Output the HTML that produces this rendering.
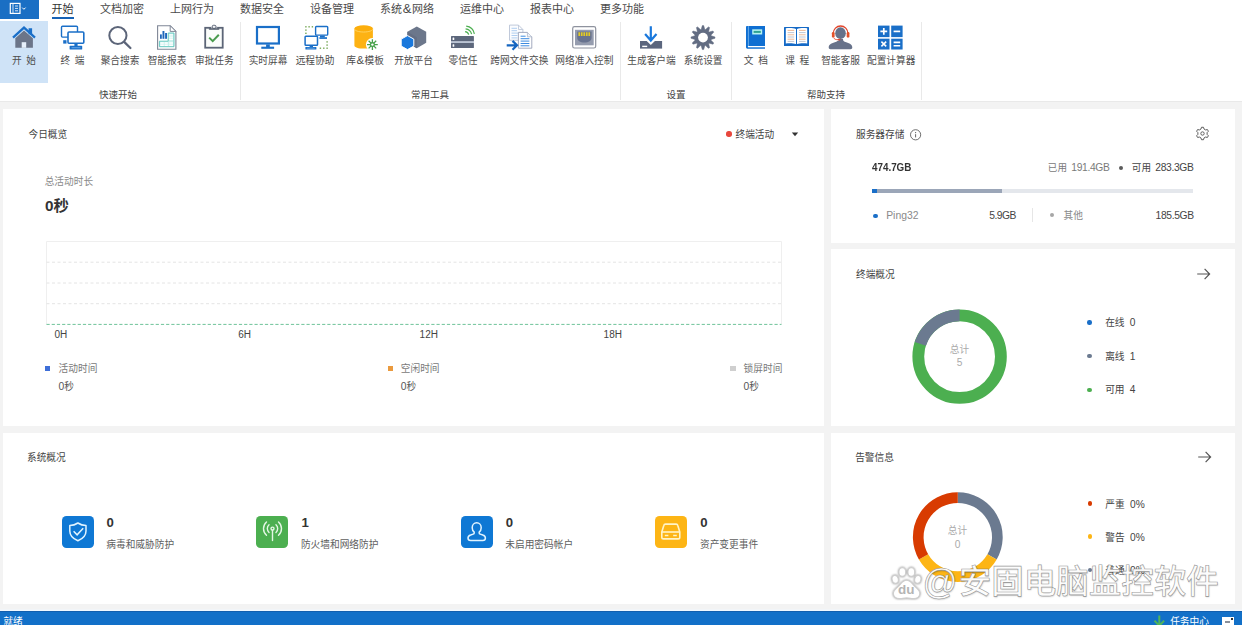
<!DOCTYPE html>
<html lang="zh-CN">
<head>
<meta charset="utf-8">
<title>Ping32</title>
<style>
*{box-sizing:border-box;margin:0;padding:0}
html,body{width:1242px;height:625px;overflow:hidden;background:#f3f3f3}
body{position:relative;font-family:"Liberation Sans","Noto Sans CJK SC",sans-serif;color:#444;font-size:10px}
.abs{position:absolute}
/* menu bar */
#menubar{position:absolute;left:0;top:0;width:1242px;height:19px;background:#fff}
#appbtn{position:absolute;left:0;top:0;width:38.7px;height:18.8px;background:#1a6fc4}
.tab{position:absolute;top:1.8px;height:15px;line-height:15px;font-size:11px;color:#4a4a4a;white-space:nowrap;transform:translateX(-50%)}
.tab.on{color:#333}
#tabline{position:absolute;left:52.2px;top:16.7px;width:21.6px;height:2.1px;background:#1762b5}
/* ribbon */
#ribbon{position:absolute;left:0;top:19px;width:1242px;height:83.4px;background:#fff;border-bottom:0.9px solid #e9e9e9}
#selbtn{position:absolute;left:0;top:20.8px;width:48.2px;height:62px;background:#cfe3f7}
.rb{position:absolute;top:54px;height:14px;line-height:14px;font-size:9.7px;color:#4d4d4d;white-space:nowrap;transform:translateX(-50%)}
.ic{position:absolute;top:25px;width:26px;height:26px;transform:translateX(-50%)}
.ic svg{display:block;width:26px;height:26px}
.grp{position:absolute;top:88px;height:13px;line-height:13px;font-size:9.5px;color:#444;white-space:nowrap;transform:translateX(-50%)}
.sep{position:absolute;top:22px;width:1px;height:78px;background:#e9e9e9}
/* cards */
.card{position:absolute;background:#fff}
.ct{position:absolute;font-size:9.7px;color:#444;white-space:nowrap;line-height:14px;margin-top:0.5px}
.xl{transform:translateX(-50%);font-size:10px;color:#444}
.n{font-size:10.3px}
.lt{font-size:10.3px}
.sq{top:515.5px;width:32.3px;height:32.3px;border-radius:4.5px}
.num{top:513px;font-size:13.2px;line-height:20px;font-weight:bold;color:#333}
#wmt{left:958.7px;top:560.2px;font-size:32.5px}
.wmc{line-height:44px;white-space:nowrap;color:rgba(255,255,255,0.95);-webkit-text-stroke:0.6px rgba(105,105,105,0.7);text-shadow:0.6px 0.6px 1.5px rgba(0,0,0,0.2);font-family:"Liberation Sans","Noto Sans CJK SC",sans-serif;font-weight:500}
/* status bar */
#status{position:absolute;left:0;top:610.7px;width:1242px;height:15px;background:#1270c8;border-top:0.9px solid #125fae;box-shadow:0 -1.4px 0 #f1f8ff}
</style>
</head>
<body>
<div id="menubar">
  <div id="appbtn">
    <svg class="abs" style="left:8px;top:2px" width="22" height="13" viewBox="0 0 22 13"><rect x="2.3" y="1.4" width="9.7" height="10" fill="none" stroke="#fff" stroke-width="1.2"/><path d="M5 1.400v10M7 4h3M7 6.400h3M7 8.800h3" stroke="#e8f1fb" stroke-width="0.900" fill="none"/><path d="M14.200 5.600l1.700 1.700 1.700-1.700" stroke="#fff" stroke-width="1" fill="none"/></svg>
  </div>
  <div class="tab on" style="left:62.5px">开始</div>
  <div class="tab" style="left:122px">文档加密</div>
  <div class="tab" style="left:192px">上网行为</div>
  <div class="tab" style="left:262px">数据安全</div>
  <div class="tab" style="left:332px">设备管理</div>
  <div class="tab" style="left:407px">系统<span style="font-size:13px;line-height:10px;padding:0 0.7px">&amp;</span>网络</div>
  <div class="tab" style="left:482px">运维中心</div>
  <div class="tab" style="left:552px">报表中心</div>
  <div class="tab" style="left:622px">更多功能</div>
  <div id="tabline"></div>
</div>
<div id="ribbon"></div>
<div id="selbtn"></div>

<!-- ribbon labels -->
<div class="rb" style="left:24px;word-spacing:2px">开 始</div>
<div class="rb" style="left:72.5px;word-spacing:2px">终 端</div>
<div class="rb" style="left:120px">聚合搜索</div>
<div class="rb" style="left:167px">智能报表</div>
<div class="rb" style="left:214.3px">审批任务</div>
<div class="rb" style="left:268px">实时屏幕</div>
<div class="rb" style="left:315px">远程协助</div>
<div class="rb" style="left:365.1px">库<span style="font-size:11.4px;line-height:10px;padding:0 0.4px">&amp;</span>模板</div>
<div class="rb" style="left:413.5px">开放平台</div>
<div class="rb" style="left:463px">零信任</div>
<div class="rb" style="left:519.3px">跨网文件交换</div>
<div class="rb" style="left:584.4px">网络准入控制</div>
<div class="rb" style="left:651.5px">生成客户端</div>
<div class="rb" style="left:703.2px">系统设置</div>
<div class="rb" style="left:755.8px;word-spacing:2px">文 档</div>
<div class="rb" style="left:797.2px;word-spacing:2px">课 程</div>
<div class="rb" style="left:840.5px">智能客服</div>
<div class="rb" style="left:891.2px">配置计算器</div>
<div class="grp" style="left:118px">快速开始</div>
<div class="grp" style="left:430px">常用工具</div>
<div class="grp" style="left:676px">设置</div>
<div class="grp" style="left:826px">帮助支持</div>
<div class="sep" style="left:240px"></div>
<div class="sep" style="left:620px"></div>
<div class="sep" style="left:731px"></div>
<div class="sep" style="left:921px"></div>

<!-- ICONS -->
<!--ICONS-START-->
<svg class="abs" style="left:0;top:0" width="1242" height="101" viewBox="0 0 1242 101">
<!-- home -->
<g>
<path d="M15.3 38.2 L24 30.6 L32.9 38.2 V47.8 H15.3Z" fill="#6b7589"/>
<rect x="21.7" y="42.2" width="4.5" height="5.6" fill="#e6f0fb"/>
<path d="M28.6 28.2h3.5v6h-3.5z" fill="#1a6fc8"/>
<path d="M13 37.6 L24 27.6 L35 37.6" fill="none" stroke="#1a6fc8" stroke-width="2.3" stroke-linejoin="miter"/>
</g>
<!-- terminal -->
<g fill="none" stroke="#1a6fc8">
<rect x="61.5" y="26.3" width="16" height="10.8" rx="1" stroke-width="1.4" fill="#fff"/>
<rect x="63.2" y="40.2" width="3.3" height="3.4" fill="#1a6fc8" stroke="none"/>
<rect x="68" y="32" width="15.8" height="11.2" rx="1" stroke-width="1.6" fill="#fff"/>
<rect x="74.4" y="43.6" width="3.2" height="2.6" fill="#1a6fc8" stroke="none"/>
<rect x="69.6" y="45.8" width="12.6" height="3.8" rx="0.6" fill="#1a6fc8" stroke="none"/>
<path d="M71.5 47.7h9" stroke="#6aa9ea" stroke-width="0.9"/>
</g>
<!-- search -->
<g fill="none" stroke="#5c6579" stroke-linecap="round">
<circle cx="117.9" cy="35.5" r="8.6" stroke-width="2"/>
<path d="M124.4 42.2L130.4 48" stroke-width="2.3"/>
</g>
<!-- report -->
<g>
<path d="M157.600 25.700h12.600l5.700 5.700v17.800h-18.300z" fill="#fff" stroke="#7f8696" stroke-width="1.100"/>
<path d="M170.200 25.700v5.700h5.700z" fill="#fff" stroke="#7f8696" stroke-width="1" stroke-linejoin="round"/>
<rect x="160" y="34.400" width="1.800" height="4.400" fill="#1e66bb"/>
<rect x="162.500" y="31" width="1.900" height="7.800" fill="#1e66bb"/>
<rect x="165.100" y="33" width="1.900" height="5.800" fill="#1e66bb"/>
<path d="M159.400 41.200h8.800v-8.200h5.800v13.700h-14.600z" fill="#c9efec" stroke="#5cc4bc" stroke-width="0.900"/>
<path d="M160.400 42.300h3.400v1.500h-3.400zM164.600 42.300h3.200v1.500h-3.200zM160.400 44.500h3.400v1.400h-3.400zM164.600 44.500h3.200v1.400h-3.200zM169.200 34.200h3.800v1.400h-3.800zM169.200 36.400h3.800v1.400h-3.800zM169.200 38.600h3.800v1.400h-3.800zM169.200 42.300h3.800v1.500h-3.800zM169.200 44.500h3.800v1.400h-3.800z" fill="#fff"/>
</g>
<!-- approve -->
<g>
<rect x="205.200" y="27.800" width="17.500" height="19.900" fill="#fbfdfb" stroke="#5c6577" stroke-width="1.800"/>
<path d="M211 28.600h6.200" stroke="#fbfdfb" stroke-width="2.400"/>
<rect x="212.300" y="25.300" width="3.600" height="3" rx="1" fill="#f4f5f8" stroke="#5c6577" stroke-width="1"/>
<path d="M209.500 28.900h9.200" stroke="#4f5869" stroke-width="1.500" stroke-linecap="round"/>
<path d="M209.200 37.600l3.500 3.500 6.100-6.400" fill="none" stroke="#4a9c4e" stroke-width="2"/>
</g>
<!-- monitor -->
<g>
<rect x="257" y="27" width="21.9" height="16.5" fill="#fff" stroke="#1a6fc8" stroke-width="2.2"/>
<rect x="266.1" y="44.4" width="3.7" height="2.8" fill="#1a6fc8"/>
<rect x="261.3" y="46.7" width="12.8" height="2.1" fill="#1a6fc8"/>
</g>
<!-- remote -->
<g>
<rect x="305.2" y="26.1" width="1.4" height="1.4" fill="#74a653"/><rect x="308.4" y="26.1" width="1.4" height="1.4" fill="#74a653"/><rect x="311.7" y="26.1" width="1.4" height="1.4" fill="#74a653"/><rect x="305.2" y="29.4" width="1.4" height="1.4" fill="#74a653"/><rect x="305.2" y="32.6" width="1.4" height="1.4" fill="#74a653"/><rect x="326.4" y="41.2" width="1.4" height="1.4" fill="#74a653"/><rect x="326.4" y="44.4" width="1.4" height="1.4" fill="#74a653"/><rect x="326.4" y="47.5" width="1.4" height="1.4" fill="#74a653"/><rect x="323.1" y="47.5" width="1.4" height="1.4" fill="#74a653"/><rect x="319.7" y="47.5" width="1.4" height="1.4" fill="#74a653"/>
<rect x="315.6" y="26.5" width="12.1" height="8.6" rx="0.8" fill="#fff" stroke="#1a6fc8" stroke-width="1.4"/>
<rect x="320" y="35.6" width="4.8" height="1.7" fill="#1a6fc8"/>
<rect x="319.4" y="37.2" width="7.6" height="1.7" fill="#1a6fc8"/>
<rect x="305.1" y="36.2" width="12.4" height="9" rx="0.8" fill="#fff" stroke="#1a6fc8" stroke-width="1.5"/>
<rect x="309.6" y="45.6" width="3.4" height="1.8" fill="#1a6fc8"/>
<rect x="305.4" y="47" width="11" height="2.4" rx="0.5" fill="#1a6fc8"/>
<path d="M306.8 48.2h8" stroke="#7cb6ee" stroke-width="0.7"/>
</g>
<!-- db -->
<g>
<path d="M354.400 28.600v16.800c0 1.800 4.100 3.200 9.250 3.200s9.250-1.400 9.250-3.200v-16.800z" fill="#fdb213"/>
<ellipse cx="363.650" cy="28.600" rx="9.250" ry="3.300" fill="#fcae0c"/>
<path d="M354.400 28.800c0 1.800 4.100 3.200 9.250 3.200s9.250-1.400 9.250-3.200" fill="none" stroke="#ffd567" stroke-width="0.900"/>
<circle cx="372.400" cy="44.600" r="6.500" fill="#fff"/>
<g stroke="#48a24c" stroke-width="1.300" fill="none">
<path d="M372.400 39.200v10.800M367 44.600h10.800M368.600 40.800l7.600 7.600M376.200 40.800l-7.600 7.600"/>
</g>
<circle cx="372.400" cy="44.600" r="2.500" fill="#48a24c"/>
<circle cx="372.400" cy="44.600" r="1.200" fill="#fff"/>
</g>
<!-- platform -->
<g>
<path d="M416.8 26.4l9.4 5.4v10.9l-9.4 5.5-9.4-5.5v-10.9z" fill="#6c778b"/>
<path d="M416.8 37.3v10.9l-9.4-5.5v-10.9z" fill="#646e83"/>
<path d="M407.5 35.6l6.3 3.5v7l-6.3 3.5-6.3-3.5v-7z" fill="#1a78dc" stroke="#fff" stroke-width="1"/>
</g>
<!-- zero trust -->
<g>
<rect x="451" y="36" width="22.9" height="5.6" rx="0.6" fill="#5d677c"/>
<rect x="451" y="42.8" width="22.9" height="5.3" rx="0.6" fill="#5d677c"/>
<rect x="451" y="41.400" width="22.900" height="1.500" fill="#b7c1d3"/>
<rect x="452.600" y="37.500" width="1.700" height="2.600" rx="0.600" fill="#fff"/>
<rect x="452.600" y="44.200" width="1.700" height="2.600" rx="0.600" fill="#fff"/>
<g fill="none" stroke="#4caf50" stroke-width="1.2">
<path d="M466.2 26.2a9.6 9.6 0 0 1 8.2 7.6"/>
<path d="M465.6 28.9a6.9 6.9 0 0 1 6 5.2"/>
<path d="M465.1 31.6a4.2 4.2 0 0 1 3.6 3"/>
</g>
</g>
<!-- cross-net file -->
<g>
<path d="M509.5 25.1h9l4.4 4.4v10.8h-13.4z" fill="#fbfcfe" stroke="#b9c3d6" stroke-width="0.9"/>
<path d="M518.5 25.1v4.4h4.4" fill="none" stroke="#b9c3d6" stroke-width="0.8"/>
<path d="M511.5 28.3h5.5M511.5 30.7h5.5M511.5 33.1h8M511.5 35.5h6M511.5 37.9h6" stroke="#a6c8ee" stroke-width="0.9" fill="none"/>
<path d="M518.400 32.400h9l4.400 4.400v11.400h-13.400z" fill="#fff" stroke="#98a2b8" stroke-width="0.900"/>
<path d="M527.4 32.4v4.4h4.4" fill="#eef2f8" stroke="#aab5c9" stroke-width="0.8"/>
<path d="M520.6 36.2h5M520.6 38.7h8.8M520.6 41.1h8.8M520.6 43.5h8.8M520.6 45.8h8.8" stroke="#3c8be0" stroke-width="1" fill="none"/>
<path d="M506.700 45.300h9.500M512.500 40.900l4.500 4.400-4.500 4.400" fill="none" stroke="#1565c0" stroke-width="2.200"/>
</g>
<!-- network access -->
<g>
<rect x="572.700" y="26.600" width="23" height="21.400" rx="1.800" fill="#fff" stroke="#8e929e" stroke-width="1.200"/>
<rect x="575" y="29.800" width="18.700" height="15.500" fill="#959cae"/>
<path d="M577.200 31.400h14.400v6.400c0 2.800-3 4.800-7.200 4.800s-7.200-2-7.200-4.800z" fill="#68738f"/>
<path d="M578.400 32.200h1.700v3.800h-1.700zM580.900 32.200h1.700v3.800h-1.700zM583.400 32.200h1.700v3.800h-1.700zM585.900 32.200h1.700v3.800h-1.700zM588.400 32.200h1.700v3.800h-1.700z" fill="#e3cb25"/>
</g>
<!-- download -->
<g>
<path d="M640 41h22.100v7.600h-22.100z" fill="#5b667e"/>
<path d="M646.400 40.800h8.800l-4.400 4.300z" fill="#fff"/>
<rect x="642.200" y="45.700" width="5" height="1.400" fill="#fff"/>
<path d="M650.800 26.300v13.600M645.100 34l5.700 6.500 5.700-6.500" fill="none" stroke="#1a78dc" stroke-width="2.200"/>
</g>
<!-- gear -->
<g transform="translate(703 37.600)">
<path d="M-1.82 -8.20L-0.67 -11.98L0.67 -11.98L1.82 -8.20L2.53 -8.01L5.41 -10.71L6.57 -10.04L5.67 -6.19L6.19 -5.67L10.04 -6.57L10.71 -5.41L8.01 -2.53L8.20 -1.82L11.98 -0.67L11.98 0.67L8.20 1.82L8.01 2.53L10.71 5.41L10.04 6.57L6.19 5.67L5.67 6.19L6.57 10.04L5.41 10.71L2.53 8.01L1.82 8.20L0.67 11.98L-0.67 11.98L-1.82 8.20L-2.53 8.01L-5.41 10.71L-6.57 10.04L-5.67 6.19L-6.19 5.67L-10.04 6.57L-10.71 5.41L-8.01 2.53L-8.20 1.82L-11.98 0.67L-11.98 -0.67L-8.20 -1.82L-8.01 -2.53L-10.71 -5.41L-10.04 -6.57L-6.19 -5.67L-5.67 -6.19L-6.57 -10.04L-5.41 -10.71L-2.53 -8.01Z" fill="#626c82" stroke="#626c82" stroke-width="0.500" stroke-linejoin="round"/>
<circle r="4.900" fill="#fff"/>
</g>
<!-- book -->
<g>
<path d="M746 27a0.900 0.900 0 0 1 0.900-0.900h18.100v22.600h-17.600a1.400 1.400 0 0 1-1.400-1.400z" fill="#0f6fd2"/>
<path d="M748.400 26.100v20" stroke="#8cc4f4" stroke-width="0.700"/>
<path d="M747.900 46h17.100v1.300h-17.100z" fill="#fff"/>
<rect x="752.200" y="29.300" width="10" height="5.200" fill="#b4f1f0"/>
<rect x="753.600" y="30.900" width="7.200" height="2" fill="#2fa392"/>
</g>
<!-- open book -->
<g>
<path d="M784 27.600a0.500 0.500 0 0 1 0.500-0.500h24a0.500 0.500 0 0 1 0.500 0.500v18.500h-25z" fill="#1469c6"/>
<path d="M785.800 28.300c3.800-0.500 7.600-0.300 10.200 0.800v14.900c-2.600-0.900-6.400-1.100-10.200-0.600z" fill="#fff"/>
<path d="M807.200 28.300c-3.800-0.500-7.600-0.300-10.200 0.800v14.900c2.600-0.900 6.400-1.100 10.200-0.600z" fill="#fff"/>
<g stroke-width="0.800" fill="none">
<path d="M787.600 30.400h6.600M787.600 34.800h6.600M787.600 39.200h6.600M799 30.400h6.600M799 34.800h6.600M799 39.200h6.600" stroke="#e9a77c"/>
<path d="M787.600 32.600h6.600M787.600 37h6.600M787.600 41.400h6.600M799 32.600h6.600M799 37h6.600M799 41.400h6.600" stroke="#aeb6c6"/>
</g>
</g>
<!-- customer service -->
<g>
<ellipse cx="840.500" cy="33.200" rx="5.300" ry="5.900" fill="#67728a"/>
<path d="M828.700 47.600c0-3.800 3.600-4.700 7.600-5.900 1.200-0.400 1.700-1.200 1.700-2.600h5c0 1.400 0.500 2.200 1.700 2.600 4 1.200 7.600 2.100 7.600 5.900 0 1-0.800 1.700-1.800 1.700h-20c-1 0-1.800-0.700-1.800-1.700z" fill="#67728a"/>
<path d="M833.300 33.400a7.300 7.400 0 0 1 14.600 0" fill="none" stroke="#e2452b" stroke-width="1.300"/>
<rect x="831.900" y="32" width="2.700" height="5.600" rx="1.200" fill="#e4512a"/>
<rect x="846.700" y="32" width="2.700" height="5.600" rx="1.200" fill="#e4512a"/>
<path d="M833.600 37.400c0.500 1.800 2.200 2.400 5 2.300" fill="none" stroke="#fff" stroke-width="1.900"/>
<path d="M833.600 37.400c0.500 1.800 2.200 2.400 5 2.300" fill="none" stroke="#e2452b" stroke-width="0.900"/>
<rect x="838" y="38.800" width="2.600" height="1.600" rx="0.800" fill="#e2452b"/>
</g>
<!-- calculator -->
<g>
<rect x="878" y="25.600" width="11.500" height="11.500" fill="#1a6fc8"/>
<rect x="891.200" y="25.600" width="11.400" height="11.500" fill="#1a6fc8"/>
<rect x="878" y="38.700" width="11.500" height="10.800" fill="#1a6fc8"/>
<rect x="891.200" y="38.700" width="11.400" height="10.800" fill="#1a6fc8"/>
<path d="M880.400 31.400h6.800M883.800 28v6.800" stroke="#fff" stroke-width="1.700" fill="none"/>
<path d="M893.600 31.400h6.600" stroke="#fff" stroke-width="1.700" fill="none"/>
<path d="M881.400 41.600l4.800 4.800M886.200 41.600l-4.800 4.800" stroke="#fff" stroke-width="1.500" fill="none"/>
<path d="M893.600 42.400h6.600M893.600 45.800h6.600" stroke="#fff" stroke-width="1.600" fill="none"/>
</g>
</svg>
<!--ICONS-END-->

<!-- cards -->
<div class="card" style="left:2.6px;top:108.8px;width:821.4px;height:317.5px"></div>
<div class="card" style="left:2.6px;top:432.8px;width:821.4px;height:171.3px"></div>
<div class="card" style="left:831.3px;top:108.8px;width:404px;height:133.9px"></div>
<div class="card" style="left:831.3px;top:248.7px;width:404px;height:177.6px"></div>
<div class="card" style="left:831.3px;top:432.8px;width:404px;height:171.3px"></div>

<!--CARD1-->
<div class="ct" style="left:28.5px;top:127.5px">今日概览</div>
<div class="abs" style="left:726.4px;top:131.3px;width:5.4px;height:5.4px;border-radius:50%;background:#e8473d"></div>
<div class="ct" style="left:735.5px;top:127.5px">终端活动</div>
<svg class="abs" style="left:791px;top:132px" width="8" height="5" viewBox="0 0 8 5"><path d="M0.8 0.6h6.4L4 4.2z" fill="#333"/></svg>
<div class="ct" style="left:44.7px;top:174.9px;color:#8a8a8a">总活动时长</div>
<div class="abs" style="left:45px;top:196px;font-size:15.3px;line-height:20px;font-weight:bold;color:#333;white-space:nowrap">0秒</div>
<svg class="abs" style="left:40px;top:236px" width="750" height="94" viewBox="40 236 750 94">
<path d="M46.5 324.4V241.5H781.5V324.4" fill="none" stroke="#efefef" stroke-width="1"/>
<path d="M46.5 262.2H781.5M46.5 283H781.5M46.5 303.7H781.5" fill="none" stroke="#e4e4e4" stroke-width="1" stroke-dasharray="3 2.5"/>
<path d="M46.5 324.4H781.5" fill="none" stroke="#6fc39a" stroke-width="1" stroke-dasharray="3.2 2"/>
</svg>
<div class="ct xl" style="left:60.9px;top:327.7px">0H</div>
<div class="ct xl" style="left:244.7px;top:327.7px">6H</div>
<div class="ct xl" style="left:428.8px;top:327.7px">12H</div>
<div class="ct xl" style="left:612.8px;top:327.7px">18H</div>
<div class="abs" style="left:45px;top:365.8px;width:5.4px;height:5.2px;background:#3f6fd8"></div>
<div class="ct" style="left:58.6px;top:361.7px;color:#7a7a7a">活动时间</div>
<div class="ct" style="left:58.6px;top:379px;color:#555"><span class="n">0</span>秒</div>
<div class="abs" style="left:387.6px;top:365.8px;width:5.4px;height:5.2px;background:#ea9a3e"></div>
<div class="ct" style="left:400.8px;top:361.7px;color:#7a7a7a">空闲时间</div>
<div class="ct" style="left:400.8px;top:379px;color:#555"><span class="n">0</span>秒</div>
<div class="abs" style="left:730.2px;top:365.8px;width:5.4px;height:5.2px;background:#cfcfcf"></div>
<div class="ct" style="left:743.6px;top:361.7px;color:#7a7a7a">锁屏时间</div>
<div class="ct" style="left:743.6px;top:379px;color:#555"><span class="n">0</span>秒</div>

<!--CARD2-->
<div class="ct" style="left:27px;top:450.500px">系统概况</div>
<div class="abs sq" style="left:62px;background:#0f78d4"></div>
<div class="abs sq" style="left:256.100px;background:#4caf50"></div>
<div class="abs sq" style="left:460.600px;background:#0f78d4"></div>
<div class="abs sq" style="left:655.200px;background:#fdb515"></div>
<svg class="abs" style="left:62px;top:515px" width="640" height="34" viewBox="62 515 640 34">
<!-- shield -->
<path d="M77.900 523c2.600 1.700 5.200 2.400 8.100 2.500v5.600c0 4.700-3.500 7.900-8.100 9.700-4.600-1.800-8.100-5-8.100-9.700v-5.600c2.900-0.100 5.500-0.800 8.100-2.500z" fill="none" stroke="#e2f4ff" stroke-width="1.500" stroke-linejoin="round"/>
<path d="M73.600 531.300l3.500 3.500 6.100-6.500" fill="none" stroke="#e2f4ff" stroke-width="1.500"/>
<!-- antenna -->
<g fill="none" stroke="#e4f6e4" stroke-width="1.400" stroke-linecap="round">
<circle cx="272.500" cy="528.600" r="1.500"/>
<path d="M272.500 530.300v10.300"/>
<path d="M269.020 524.740a5.200 5.200 0 0 0 0 7.720M275.980 524.740a5.200 5.200 0 0 1 0 7.720"/>
<path d="M266.480 521.910a9 9 0 0 0 0 13.380M278.520 521.910a9 9 0 0 1 0 13.380"/>
</g>
<!-- person -->
<path d="M476.700 522.800c2.600 0 4.500 2.100 4.500 4.900c0 1.900-0.800 3.400-2 4.400v0.800c0 0.600 0.400 1 1 1.200l2.600 0.900c1.600 0.500 2.600 1.700 2.600 3.100c0 1.400-1 2.500-2.600 2.500h-12.200c-1.600 0-2.600-1.100-2.600-2.500c0-1.400 1-2.600 2.600-3.100l2.600-0.900c0.600-0.200 1-0.600 1-1.200v-0.800c-1.200-1-2-2.500-2-4.400c0-2.800 1.900-4.900 4.500-4.900z" fill="none" stroke="#e2f4ff" stroke-width="1.500" stroke-linejoin="round"/>
<!-- drive -->
<g fill="none" stroke="#fff4c8" stroke-width="1.600" stroke-linejoin="round">
<path d="M661.800 532l2-6.600c0.200-0.800 0.900-1.300 1.700-1.300h10.600c0.800 0 1.500 0.500 1.700 1.300l2 6.600v5.200c0 1-0.800 1.700-1.700 1.700h-14.600c-0.900 0-1.700-0.700-1.700-1.700z"/>
<path d="M661.800 532h18"/>
<path d="M664.800 535.600h3.600M673.200 535.600h3.600" stroke-width="1.500"/>
</g>
</svg>
<div class="abs num" style="left:106.600px">0</div>
<div class="ct" style="left:106.300px;top:537.200px;color:#5e5e5e">病毒和威胁防护</div>
<div class="abs num" style="left:301.600px">1</div>
<div class="ct" style="left:300.900px;top:537.200px;color:#5e5e5e">防火墙和网络防护</div>
<div class="abs num" style="left:505.700px">0</div>
<div class="ct" style="left:505.300px;top:537.200px;color:#5e5e5e">未启用密码帐户</div>
<div class="abs num" style="left:700.200px">0</div>
<div class="ct" style="left:700px;top:537.200px;color:#5e5e5e">资产变更事件</div>

<!--CARD3-->
<div class="ct" style="left:856px;top:127.6px">服务器存储</div>
<svg class="abs" style="left:909px;top:128px" width="14" height="14" viewBox="0 0 14 14"><circle cx="6.6" cy="6.8" r="5.1" fill="none" stroke="#555" stroke-width="0.85"/><path d="M6.6 6.2v3.2" stroke="#555" stroke-width="0.9"/><circle cx="6.6" cy="4.6" r="0.6" fill="#555"/></svg>
<svg class="abs" style="left:1194.9px;top:126px" width="15" height="15" viewBox="-7.5 -7.5 15 15"><path d="M-1.53 -4.44L-0.99 -6.22L0.99 -6.22L1.53 -4.44L3.08 -3.55L4.90 -3.96L5.88 -2.26L4.61 -0.90L4.61 0.90L5.88 2.26L4.90 3.96L3.08 3.55L1.53 4.44L0.99 6.22L-0.99 6.22L-1.53 4.44L-3.08 3.55L-4.90 3.96L-5.88 2.26L-4.61 0.90L-4.61 -0.90L-5.88 -2.26L-4.90 -3.96L-3.08 -3.55Z" fill="none" stroke="#555" stroke-width="0.95" stroke-linejoin="round"/><circle r="1.7" fill="none" stroke="#555" stroke-width="0.9"/></svg>
<div class="abs" id="t_total" style="left:872px;top:160.600px;font-size:10.3px;line-height:14px;font-weight:bold;color:#333;white-space:nowrap;transform-origin:0 50%;transform:scaleX(0.955)">474.7GB</div>
<div class="ct" style="left:1047.8px;top:160.3px;color:#7a7a7a;font-size:9.6px">已用</div><div class="ct lt" id="t_used" style="left:1071.3px;top:160.3px;color:#7a7a7a;letter-spacing:-0.36px">191.4GB</div>
<div class="abs" style="left:1118.7px;top:165.8px;width:4px;height:4px;border-radius:50%;background:#5a5a5a"></div>
<div class="ct" style="left:1131.8px;top:160.3px;color:#444;font-size:9.6px">可用</div><div class="ct lt" id="t_avail" style="left:1155.3px;top:160.3px;color:#444;letter-spacing:-0.36px">283.3GB</div>
<div class="abs" style="left:872.3px;top:188.5px;width:320.7px;height:4.3px;background:#e4e7ec"></div>
<div class="abs" style="left:872.3px;top:188.5px;width:129.7px;height:4.3px;background:#9ba6b8"></div>
<div class="abs" style="left:872.3px;top:188.5px;width:4.8px;height:4.3px;background:#1a6fc8"></div>
<div class="abs" style="left:873.3px;top:213.8px;width:4.4px;height:4.4px;border-radius:50%;background:#1a6fc8"></div>
<div class="ct" style="left:886.2px;top:208.6px;color:#8a8a8a;font-size:10.4px">Ping32</div>
<div class="ct lt" id="t_p32" style="left:989.2px;top:208.6px;color:#444;letter-spacing:-0.48px">5.9GB</div>
<div class="abs" style="left:1032.3px;top:207.5px;width:1px;height:14.5px;background:#e6e6e6"></div>
<div class="abs" style="left:1050.4px;top:213.2px;width:4px;height:4px;border-radius:50%;background:#a6a6a6"></div>
<div class="ct" style="left:1063.6px;top:208.6px;color:#8a8a8a">其他</div>
<div class="ct lt" id="t_other" style="left:1155.6px;top:208.6px;color:#444;letter-spacing:-0.36px">185.5GB</div>

<!--CARD4-->
<div class="ct" style="left:856px;top:267.6px">终端概况</div>
<svg class="abs" style="left:1195px;top:267px" width="17" height="14" viewBox="1195 267 17 14"><path d="M1197.200 274h12M1204.600 268.900l5 5.100-5 5.100" fill="none" stroke="#555" stroke-width="1.200"/></svg>
<svg class="abs" style="left:905px;top:302px" width="110" height="110" viewBox="905 302 110 110">
<circle cx="959.600" cy="356.600" r="41.300" fill="none" stroke="#4caf50" stroke-width="11.800"/>
<path d="M959.600 315.300A41.300 41.300 0 0 0 920.320 343.840" fill="none" stroke="#6b7a90" stroke-width="11.800"/>
</svg>
<div class="ct" style="left:959.500px;top:342.600px;transform:translateX(-50%);color:#aaa">总计</div>
<div class="ct" style="left:959.500px;top:355.400px;transform:translateX(-50%);color:#aaa;font-size:10.2px">5</div>
<div class="abs" style="left:1087.3px;top:320.4px;width:4.4px;height:4.4px;border-radius:50%;background:#1a6fc8"></div>
<div class="ct" style="left:1105.200px;top:315.500px">在线<span style="padding-left:5.3px;font-size:10.2px">0</span></div>
<div class="abs" style="left:1087.3px;top:353.9px;width:4.4px;height:4.4px;border-radius:50%;background:#6b7a90"></div>
<div class="ct" style="left:1105.200px;top:349px">离线<span style="padding-left:5.3px;font-size:10.2px">1</span></div>
<div class="abs" style="left:1087.3px;top:387.6px;width:4.4px;height:4.4px;border-radius:50%;background:#4caf50"></div>
<div class="ct" style="left:1105.200px;top:382.700px">可用<span style="padding-left:5.3px;font-size:10.2px">4</span></div>

<!--CARD5-->
<div class="ct" style="left:855.2px;top:450.5px">告警信息</div>
<svg class="abs" style="left:1196px;top:450px" width="17" height="14" viewBox="1195 267 17 14"><path d="M1197.200 274h12M1204.600 268.900l5 5.100-5 5.100" fill="none" stroke="#555" stroke-width="1.200"/></svg>
<svg class="abs" style="left:905px;top:485px" width="106" height="106" viewBox="905 485 106 106">
<path d="M957.800 497.550A39.550 39.550 0 0 1 992.050 556.875" fill="none" stroke="#6b7a90" stroke-width="10.700"/>
<path d="M992.050 556.875A39.550 39.550 0 0 1 923.550 556.875" fill="none" stroke="#fdb515" stroke-width="10.700"/>
<path d="M923.550 556.875A39.550 39.550 0 0 1 957.800 497.550" fill="none" stroke="#d83b01" stroke-width="10.700"/>
</svg>
<div class="ct" style="left:957.5px;top:523.7px;transform:translateX(-50%);color:#aaa">总计</div>
<div class="ct" style="left:957.5px;top:537px;transform:translateX(-50%);color:#aaa;font-size:10.2px">0</div>
<div class="abs" style="left:1087.6px;top:501.4px;width:4.4px;height:4.4px;border-radius:50%;background:#d83b01"></div>
<div class="ct" style="left:1105.3px;top:497px">严重<span style="padding-left:5.3px;font-size:10.2px">0%</span></div>
<div class="abs" style="left:1087.6px;top:534.4px;width:4.4px;height:4.4px;border-radius:50%;background:#fdb515"></div>
<div class="ct" style="left:1105.3px;top:530.2px">警告<span style="padding-left:5.3px;font-size:10.2px">0%</span></div>
<div class="abs" style="left:1087.6px;top:567.7px;width:4.4px;height:4.4px;border-radius:50%;background:#6b7a90"></div>
<div class="ct" style="left:1105.3px;top:563.5px">普通<span style="padding-left:5.3px;font-size:10.2px">0%</span></div>


<div id="status">
  <div class="abs" style="left:3.400px;top:3.800px;font-size:9.700px;line-height:13px;color:#fff">就绪</div>
  <svg class="abs" style="left:1152px;top:2px" width="15" height="13" viewBox="1152 612 15 13"><path d="M1159.300 613.400v10.200M1154.500 618.600l4.800 5.200 4.800-5.200" fill="none" stroke="#4fb45a" stroke-width="2"/></svg>
  <div class="abs" style="left:1170.200px;top:3.800px;font-size:9.700px;line-height:13px;color:#fff;white-space:nowrap">任务中心</div>
  <div class="abs" style="left:1222.400px;top:5.800px;width:11.800px;height:7.600px;background:#fff"></div>
  <div class="abs" style="left:1225px;top:9.500px;width:5px;height:1.500px;background:#8a8f99"></div>
  <div class="abs" style="left:1231.300px;top:6.500px;width:1.600px;height:2.200px;background:#333"></div>
</div>
<!--WATERMARK-->
<div id="wm">
<svg class="abs" style="left:885px;top:562px;overflow:visible" width="42" height="42" viewBox="885 562 42 42">
<g fill="#fff" stroke="#cfcfcf" stroke-width="1.1" style="filter:drop-shadow(0 0 0.9px rgba(0,0,0,0.45))">
<ellipse cx="902.300" cy="572" rx="3.400" ry="4.400"/>
<ellipse cx="911.300" cy="572" rx="3.400" ry="4.400"/>
<ellipse cx="895.200" cy="579.400" rx="3.100" ry="4" transform="rotate(-12 895.200 579.400)"/>
<ellipse cx="917.800" cy="579.400" rx="3.100" ry="4" transform="rotate(12 917.800 579.400)"/>
<path d="M906.600 580.200c3.600 0 5 2.800 7.600 5.600 2.500 2.600 6.300 4.600 5.600 8.400-0.600 3.400-3.600 4.600-7 4.300-2.300-0.200-4.200-0.600-6.200-0.600s-3.900 0.400-6.200 0.600c-3.400 0.300-6.400-0.900-7-4.300-0.700-3.800 3.100-5.800 5.600-8.400 2.600-2.800 4-5.600 7.600-5.600z"/>
</g>
<text x="906.300" y="594.200" text-anchor="middle" font-family="Liberation Sans, sans-serif" font-weight="bold" font-size="13.500" fill="#b4b4b4">du</text>
</svg>
<div class="abs wmc" id="wmat" style="left:922.5px;top:559.5px;font-size:34.5px">@</div><div class="abs wmc" id="wmt">安固电脑监控软件</div>
</div>

</body>
</html>
